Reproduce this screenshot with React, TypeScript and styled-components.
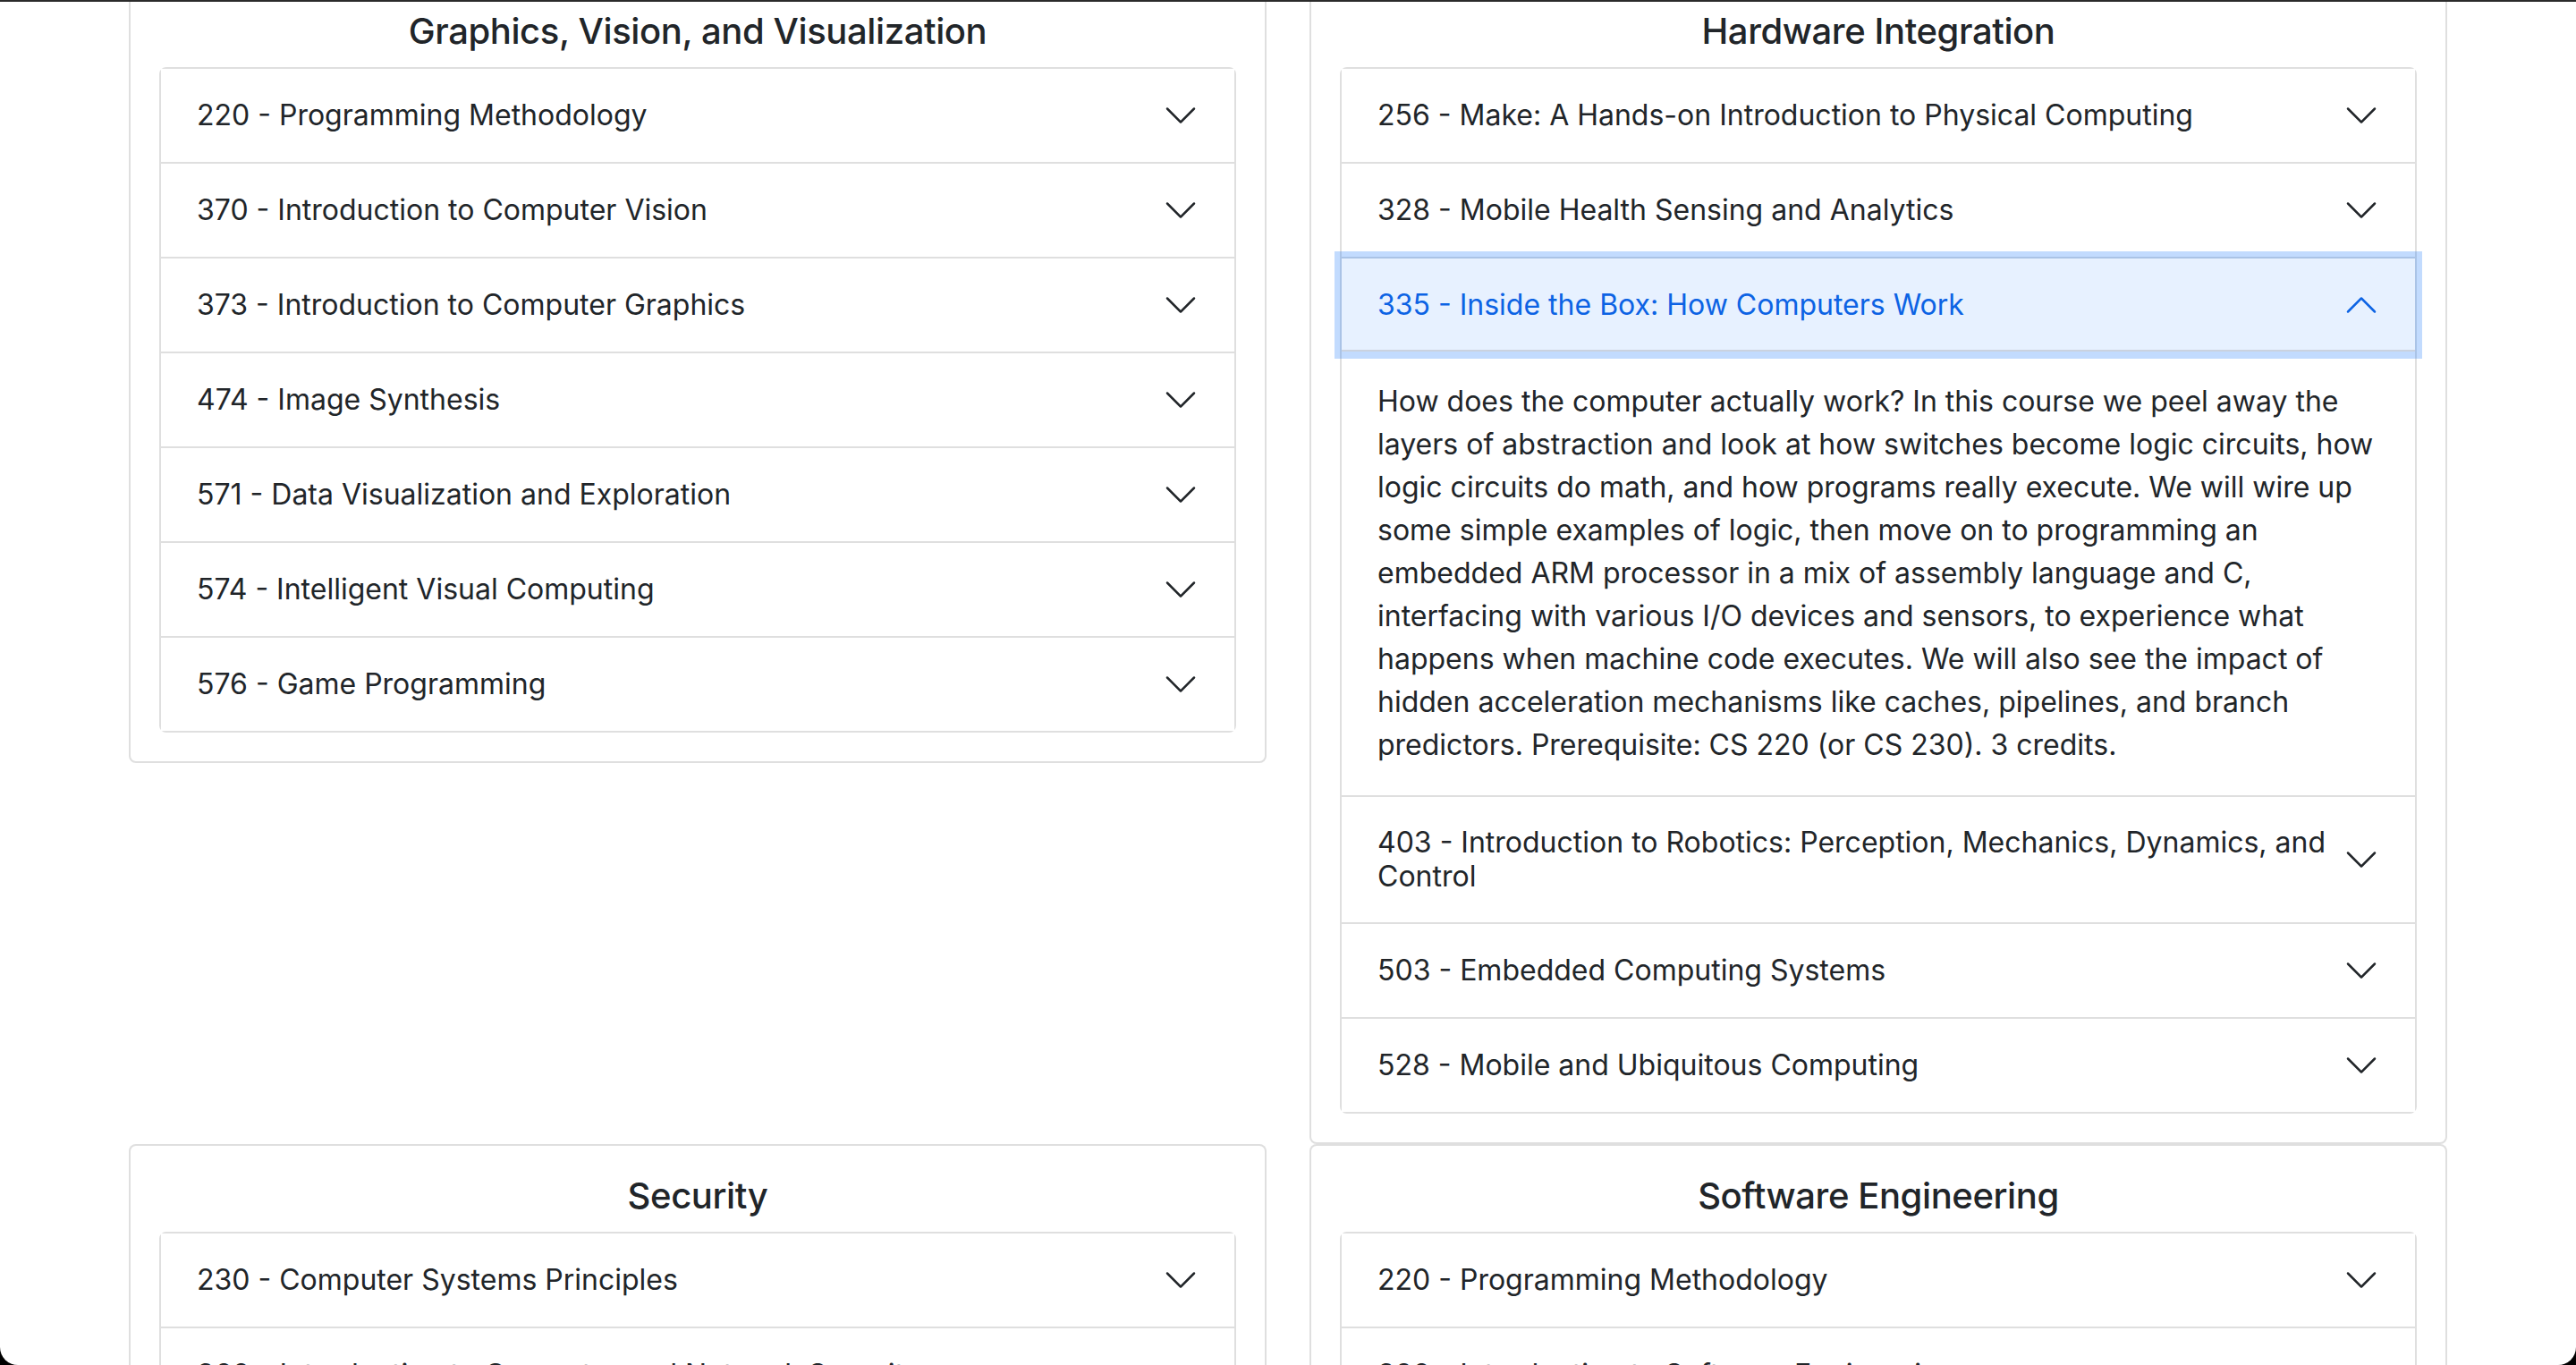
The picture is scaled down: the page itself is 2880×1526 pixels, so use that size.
import React, { useState } from "react";
import styled, { createGlobalStyle, css } from "styled-components";

const GlobalStyle = createGlobalStyle`
  html, body {
    margin: 0;
    padding: 0;
    background: #000;
  }
  body {
    font-family: Inter, "Liberation Sans", Arial, sans-serif;
    color: #212529;
    -webkit-font-smoothing: antialiased;
  }
  * { box-sizing: border-box; }
`;

const Window = styled.div`
  height: 100vh;
  background: #fff;
  border-top: 2px solid #2b2b2b;
  border-radius: 0 0 20px 20px;
  overflow: hidden;
`;

const Container = styled.main`
  max-width: 2640px;
  margin: -25px auto 0;
  padding: 0 24px;
`;

const Grid = styled.div`
  display: grid;
  grid-template-columns: 1fr 1fr;
  column-gap: 48px;
  row-gap: 0;
  align-items: start;
`;

const Card = styled.section`
  border: 2px solid rgba(0, 0, 0, 0.125);
  border-radius: 8px;
  padding: 32px;
  background: #fff;
`;

const CardTitle = styled.h5`
  margin: 0 0 16px;
  font-size: 40px;
  font-weight: 500;
  line-height: 1.2;
  letter-spacing: -0.4px;
  text-align: center;
  color: #212529;
`;

const Accordion = styled.div`
  display: flex;
  flex-direction: column;
`;

const Item = styled.div`
  border: 2px solid #dfdfdf;
  background: #fff;
  &:not(:first-of-type) {
    border-top: 0;
  }
  &:first-of-type {
    border-top-left-radius: 8px;
    border-top-right-radius: 8px;
  }
  &:last-of-type {
    border-bottom-left-radius: 8px;
    border-bottom-right-radius: 8px;
  }
`;

const HeaderButton = styled.button<{ $open: boolean }>`
  position: relative;
  display: flex;
  align-items: center;
  width: 100%;
  padding: 32px 40px;
  border: 0;
  background: #fff;
  font-family: inherit;
  font-size: 32px;
  line-height: 38px;
  color: #212529;
  text-align: left;
  cursor: pointer;
  ${(p) =>
    p.$open &&
    css`
      z-index: 3;
      color: #0c63e4;
      background: #e7f1ff;
      box-shadow: inset 0 -2px 0 rgba(0, 0, 0, 0.125),
        0 0 0 8px rgba(13, 110, 253, 0.25);
    `}
`;

const Label = styled.span`
  flex: 1;
  min-width: 0;
`;

const Chevron = styled.svg<{ $open: boolean }>`
  flex-shrink: 0;
  width: 40px;
  height: 40px;
  margin-left: auto;
  fill: ${(p) => (p.$open ? "#0c63e4" : "#212529")};
  transform: ${(p) => (p.$open ? "rotate(-180deg)" : "none")};
`;

const Body = styled.div`
  padding: 32px 40px;
  font-size: 32px;
  line-height: 48px;
  color: #212529;
`;

type Course = { code: string; title: string; desc?: string };

const ChevronIcon = ({ open }: { open: boolean }) => (
  <Chevron $open={open} viewBox="0 0 16 16" aria-hidden>
    <path
      fillRule="evenodd"
      d="M1.646 4.646a.5.5 0 0 1 .708 0L8 10.293l5.646-5.647a.5.5 0 0 1 .708.708l-6 6a.5.5 0 0 1-.708 0l-6-6a.5.5 0 0 1 0-.708z"
    />
  </Chevron>
);

const CourseItem = ({ course, initiallyOpen }: { course: Course; initiallyOpen?: boolean }) => {
  const [open, setOpen] = useState(!!initiallyOpen);
  return (
    <Item>
      <HeaderButton $open={open} onClick={() => setOpen(!open)}>
        <Label>
          {course.code} - {course.title}
        </Label>
        <ChevronIcon open={open} />
      </HeaderButton>
      {open && course.desc && <Body>{course.desc}</Body>}
    </Item>
  );
};

const AreaCard = ({ title, courses, openCode }: { title: string; courses: Course[]; openCode?: string }) => (
  <Card>
    <CardTitle>{title}</CardTitle>
    <Accordion>
      {courses.map((c) => (
        <CourseItem key={c.code} course={c} initiallyOpen={c.code === openCode} />
      ))}
    </Accordion>
  </Card>
);

const graphics: Course[] = [
  { code: "220", title: "Programming Methodology" },
  { code: "370", title: "Introduction to Computer Vision" },
  { code: "373", title: "Introduction to Computer Graphics" },
  { code: "474", title: "Image Synthesis" },
  { code: "571", title: "Data Visualization and Exploration" },
  { code: "574", title: "Intelligent Visual Computing" },
  { code: "576", title: "Game Programming" },
];

const hardware: Course[] = [
  { code: "256", title: "Make: A Hands-on Introduction to Physical Computing" },
  { code: "328", title: "Mobile Health Sensing and Analytics" },
  {
    code: "335",
    title: "Inside the Box: How Computers Work",
    desc:
      "How does the computer actually work? In this course we peel away the layers of abstraction and look at how switches become logic circuits, how logic circuits do math, and how programs really execute. We will wire up some simple examples of logic, then move on to programming an embedded ARM processor in a mix of assembly language and C, interfacing with various I/O devices and sensors, to experience what happens when machine code executes. We will also see the impact of hidden acceleration mechanisms like caches, pipelines, and branch predictors. Prerequisite: CS 220 (or CS 230). 3 credits.",
  },
  { code: "403", title: "Introduction to Robotics: Perception, Mechanics, Dynamics, and Control" },
  { code: "503", title: "Embedded Computing Systems" },
  { code: "528", title: "Mobile and Ubiquitous Computing" },
];

const security: Course[] = [
  { code: "230", title: "Computer Systems Principles" },
  { code: "360", title: "Introduction to Computer and Network Security" },
  { code: "466", title: "Applied Cryptography" },
];

const software: Course[] = [
  { code: "220", title: "Programming Methodology" },
  { code: "320", title: "Introduction to Software Engineering" },
  { code: "520", title: "Theory and Practice of Software Engineering" },
];

export default function App() {
  return (
    <>
      <GlobalStyle />
      <Window>
        <Container>
          <Grid>
            <AreaCard title="Graphics, Vision, and Visualization" courses={graphics} />
            <AreaCard title="Hardware Integration" courses={hardware} openCode="335" />
            <AreaCard title="Security" courses={security} />
            <AreaCard title="Software Engineering" courses={software} />
          </Grid>
        </Container>
      </Window>
    </>
  );
}
